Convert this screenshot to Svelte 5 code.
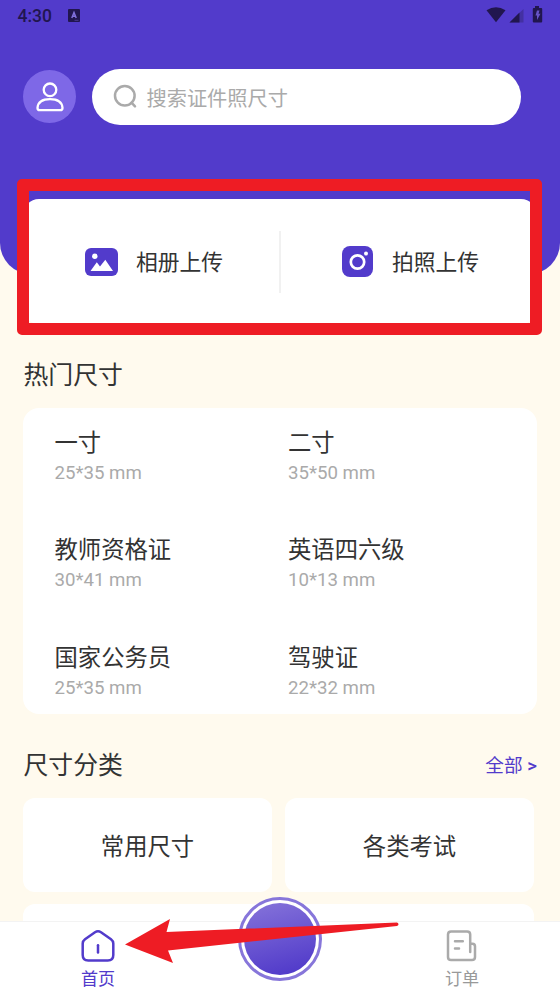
<script>
  const sizes = [
    { name: '一寸', spec: '25*35 mm' },
    { name: '二寸', spec: '35*50 mm' },
    { name: '教师资格证', spec: '30*41 mm' },
    { name: '英语四六级', spec: '10*13 mm' },
    { name: '国家公务员', spec: '25*35 mm' },
    { name: '驾驶证', spec: '22*32 mm' },
  ];
  const categories = ['常用尺寸', '各类考试', '', ''];
</script>

<div class="screen">
  <div class="content">
    <header>
      <div class="status">
        <span class="time">4:30</span>
        <svg class="app" width="12" height="13" viewBox="0 0 12 13">
          <rect width="12" height="13" rx="1" fill="#21164f" />
          <path d="M3.8 9 6 3.500l2.200 5.500M4.600 7.200h2.800" fill="none" stroke="#8170dc" stroke-width="1.500" />
          <path d="M6.500 11.300h4" stroke="#5a48ab" stroke-width=".7" />
        </svg>
        <svg class="system" width="57" height="17" viewBox="0 0 57 17">
          <path d="M.5 4.300Q10 -2 19.500 4.300L10 16.300Z" fill="#21164f" />
          <path d="M23.500 16.500 37.500 3v13.500z" fill="#4330a2" />
          <path d="M23.500 16.500 33.500 6.500v10z" fill="#21164f" />
          <path d="M49 0h4v2h2.200q1 0 1 1v12.500q0 1-1 1h-7.400q-1 0-1-1V3q0-1 1-1H49z" fill="#21164f" />
          <path d="M51 4.500h2.500l-1 3.300h2L51 14V9.500h-1.500z" fill="#6754c8" />
        </svg>
      </div>
      <div class="search-row">
        <div class="avatar">
          <svg width="28" height="32" viewBox="0 0 28 32" fill="none" stroke="#fff" stroke-width="2.300">
            <circle cx="14" cy="8.800" r="6.300" />
            <path d="M3.800 29.100Q1.500 29.100 1.500 26.900C2 21.100 7 18.200 14 18.200s12 2.900 12.500 8.700q0 2.200-2.300 2.200z" />
          </svg>
        </div>
        <div class="search">
          <svg width="24" height="25" viewBox="0 0 24 25" fill="none" stroke="#aaa" stroke-width="2.500">
            <circle cx="11.800" cy="11.700" r="9.800" />
            <path d="m18.500 18.700 3.500 3.700" stroke-linecap="round" />
          </svg>
          <span>搜索证件照尺寸</span>
        </div>
      </div>
    </header>

    <section class="upload">
      <div class="choice">
        <svg width="33" height="28" viewBox="0 0 33 28">
          <rect width="33" height="28" rx="6" fill="#523bcb" />
          <circle cx="9.800" cy="8.300" r="2.700" fill="#fff" />
          <path d="M5.500 23 11.800 14.200l3.200 4.300 5.300-6.700L28 23z" fill="#fff" />
        </svg>
        <span>相册上传</span>
      </div>
      <div class="choice second">
        <svg width="31" height="31" viewBox="0 0 31 31">
          <rect width="31" height="31" rx="8" fill="#523bcb" />
          <circle cx="15.500" cy="16" r="6.700" fill="none" stroke="#fff" stroke-width="2.700" />
          <circle cx="24" cy="7.500" r="2" fill="#fff" />
        </svg>
        <span>拍照上传</span>
      </div>
      <div class="frame"></div>
    </section>

    <h2 class="hot-title">热门尺寸</h2>
    <section class="sizes">
      {#each sizes as size}
        <div class="size">
          <div class="name">{size.name}</div>
          <div class="spec">{size.spec}</div>
        </div>
      {/each}
    </section>

    <div class="category-head">
      <h2>尺寸分类</h2>
      <span class="all">全部 <b>&gt;</b></span>
    </div>
    <section class="categories">
      {#each categories as category}
        <div class="category">{category}</div>
      {/each}
    </section>
  </div>

  <nav>
    <div class="tab active">
      <svg width="34" height="32" viewBox="0 0 34 32" fill="none" stroke="#523bcb" stroke-width="2.500" stroke-linecap="round" stroke-linejoin="round">
        <path d="M14 2.200Q17 .4 20 2.200L30 9.200Q32.300 10.900 32.300 13.500V25Q32.300 30.500 26.800 30.500H7.200Q1.700 30.500 1.700 25V13.500Q1.700 10.900 4 9.200Z" />
        <path d="M17 15.200v7.400" />
      </svg>
      <span>首页</span>
    </div>
    <div class="shutter"><div></div></div>
    <div class="tab">
      <svg width="32" height="32" viewBox="0 0 32 32" fill="none" stroke="#aaa" stroke-width="2.500" stroke-linecap="round" stroke-linejoin="round">
        <path d="M24.200 22V4.600Q24.200 1.500 21.100 1.500H5.100Q2 1.500 2 4.600v22.300Q2 30 5.100 30h20.800Q29 30 29 26.900V16.500Q29 13.700 26.500 13.700H24.200" />
        <path d="M9 11.200h7.800M9 18.500h4" />
      </svg>
      <span>订单</span>
    </div>
  </nav>
  <svg class="arrow" width="275" height="46" viewBox="0 0 275 46">
    <path d="M0 26.500 45 1 41.500 14 272 4.500Q275 6 272 8L43 32.500 48 45Z" fill="#ee1c24" />
  </svg>
</div>

<style>
  :global(body) {
    margin: 0;
  }
  .screen {
    position: relative;
    display: flex;
    flex-direction: column;
    width: 560px;
    height: 993px;
    overflow: hidden;
    background: #fffaee;
    color: #333;
    font-family: Roboto, "Noto Sans CJK SC", sans-serif;
  }
  .content {
    height: 921px;
    overflow: hidden;
  }
  header {
    height: 274px;
    background: #523bcb;
    border-radius: 0 0 31px 31px;
  }
  .status {
    display: flex;
    height: 32px;
    align-items: center;
    padding: 0 17.500px;
    color: #21164f;
  }
  .time {
    width: 50.500px;
    font-size: 17.500px;
    font-weight: 500;
  }
  .app {
    margin-top: -2px;
  }
  .system {
    margin: -3px 0 0 auto;
  }
  .search-row {
    display: flex;
    align-items: center;
    gap: 16px;
    padding: 36.500px 39px 0 23px;
  }
  .avatar {
    display: flex;
    width: 53px;
    height: 53px;
    align-items: center;
    justify-content: center;
    border-radius: 50%;
    background: #7e68e7;
  }
  .search {
    display: flex;
    flex: 1;
    height: 56px;
    box-sizing: border-box;
    align-items: center;
    padding-left: 21px;
    gap: 9.500px;
    border-radius: 28px;
    background: #fff;
    color: #aaa;
    font-size: 20.22px;
  }
  .search span {
    padding-top: 1px;
  }
  .upload {
    position: relative;
    display: flex;
    height: 125px;
    margin: -75px 23px 0;
    align-items: center;
    background: #fff;
    border-radius: 16px;
  }
  .choice {
    display: flex;
    width: 256px;
    height: 62px;
    box-sizing: border-box;
    align-items: center;
    padding-left: 62px;
    gap: 18px;
    font-size: 21.78px;
  }
  .choice span {
    padding-bottom: 2px;
  }
  .second {
    border-left: 2px solid #f1f1f1;
    padding-left: 61px;
    gap: 19px;
  }
  .frame {
    position: absolute;
    top: -20px;
    left: -6px;
    width: 501px;
    height: 132px;
    border: 12px solid #ee1c24;
    border-radius: 5px;
  }
  h2 {
    margin: 0;
    font-size: 24.89px;
    font-weight: 400;
    line-height: 36px;
  }
  .hot-title {
    margin: 34px 0 14px 23.500px;
  }
  .sizes {
    display: grid;
    grid-template-columns: 233.500px 1fr;
    grid-auto-rows: 107.300px;
    height: 306px;
    margin: 0 23px;
    box-sizing: border-box;
    padding: 18px 31px 0 31.500px;
    border-radius: 16px;
    background: #fff;
  }
  .name {
    font-size: 23.33px;
    line-height: 35px;
  }
  .spec {
    color: #aaa;
    font-size: 18.67px;
    line-height: 24px;
  }
  .category-head {
    display: flex;
    align-items: center;
    justify-content: space-between;
    margin: 34px 23px 14px 23.500px;
  }
  .all {
    padding-bottom: 5px;
    color: #523bcb;
    font-size: 18.67px;
  }
  .all b {
    font-weight: 500;
  }
  .categories {
    display: grid;
    grid-template-columns: 249px 249px;
    grid-auto-rows: 94px;
    gap: 12px 13px;
    margin-left: 23px;
  }
  .category {
    display: flex;
    align-items: center;
    justify-content: center;
    border-radius: 12px;
    background: #fff;
    font-size: 23.33px;
  }
  nav {
    display: flex;
    height: 72px;
    box-sizing: border-box;
    justify-content: space-between;
    border-top: 1px solid #f3f3f3;
    background: #fff;
  }
  .tab {
    display: flex;
    width: 196px;
    flex-direction: column;
    align-items: center;
    padding-top: 7.500px;
    color: #999;
    font-size: 17.11px;
    line-height: 25px;
    gap: 5.500px;
  }
  .active {
    color: #523bcb;
  }
  .shutter {
    width: 84px;
    height: 84px;
    margin-top: -25px;
    box-sizing: border-box;
    border: 3px solid #8776da;
    border-radius: 50%;
    background: #fff;
    padding: 3px;
  }
  .shutter div {
    height: 72px;
    border-radius: 50%;
    background: linear-gradient(165deg, #8674da, #4c35c8);
  }
  .arrow {
    position: absolute;
    left: 125px;
    top: 917.500px;
  }
</style>
